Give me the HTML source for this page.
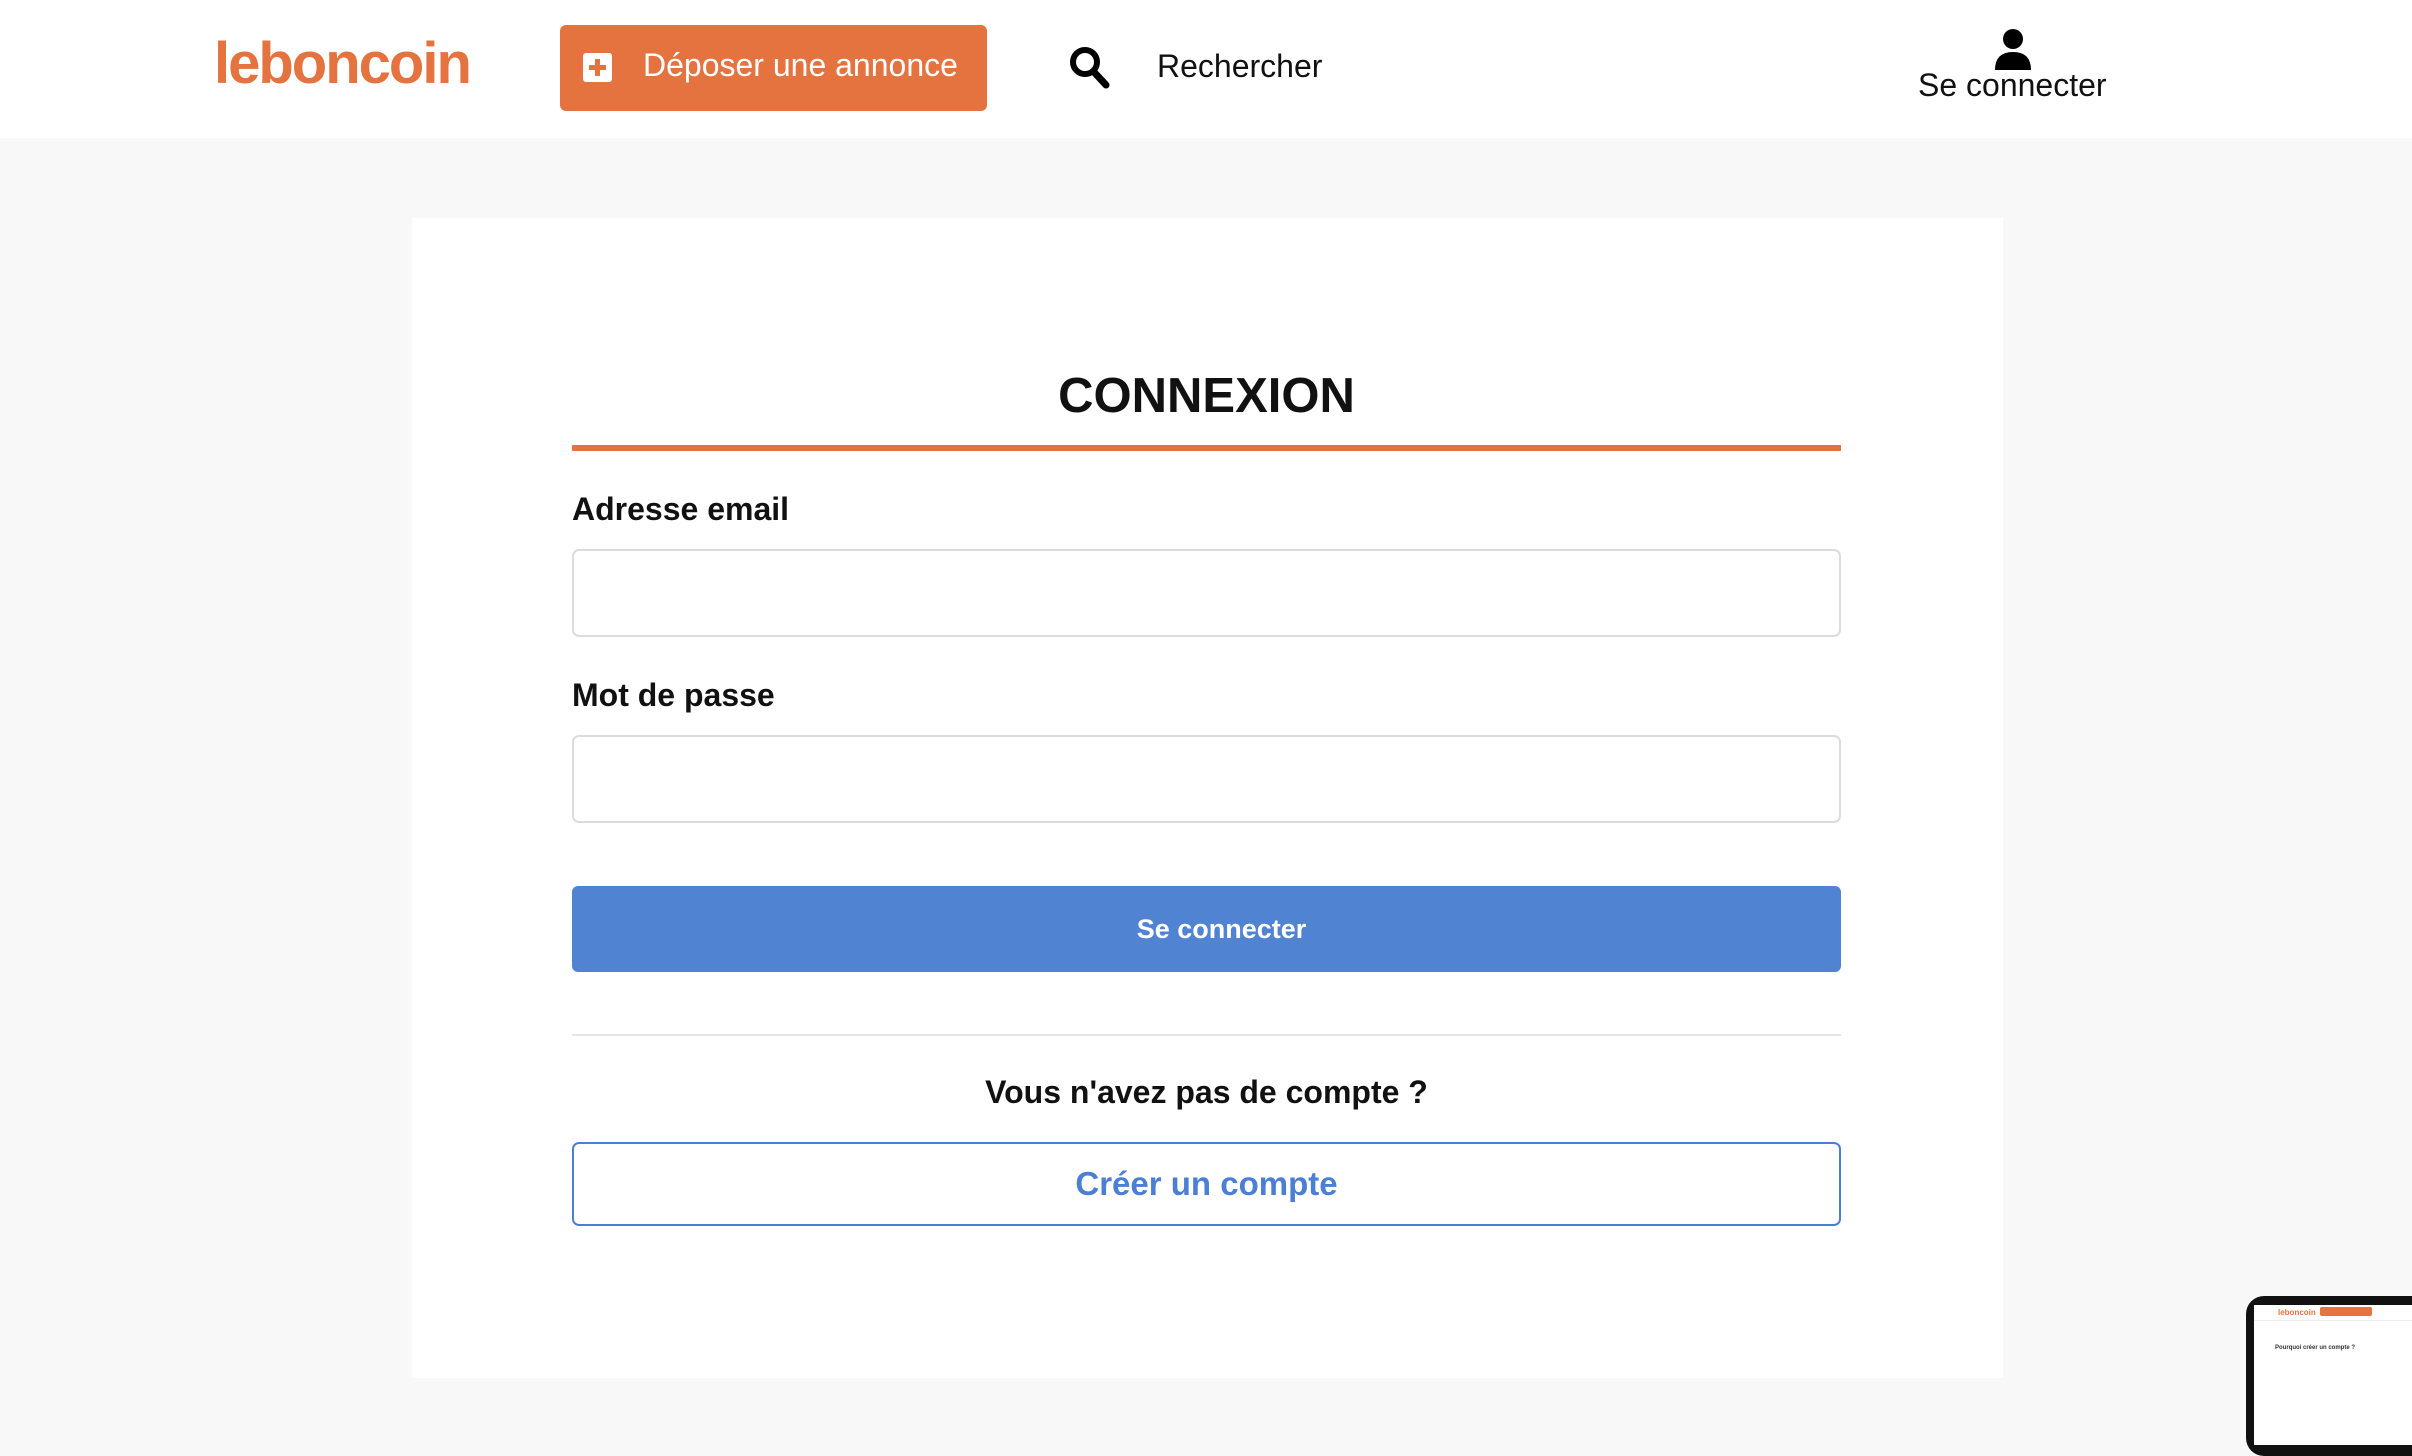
<!DOCTYPE html>
<html><head><meta charset="utf-8"><style>
*{margin:0;padding:0;box-sizing:border-box}
body{width:2412px;height:1400px;overflow:hidden;background:#f8f8f8;font-family:"Liberation Sans",sans-serif;position:relative}
.hdr{position:absolute;left:0;top:0;width:2412px;height:138px;background:#fff}
.abs{position:absolute}
.card{position:absolute;left:412px;top:218px;width:1591px;height:1160px;background:#fff}
.inp{position:absolute;left:572px;width:1269px;height:88px;border:2px solid #dcdcdc;border-radius:7px;background:#fff}
.lbl{position:absolute;left:572px;font-weight:bold;font-size:32px;color:#111}
</style></head><body>
<div class="hdr">
<div class="abs" style="left:214px;top:30px;font-size:58px;font-weight:bold;color:#e57340;letter-spacing:-2px">leboncoin</div>
<div class="abs" style="left:560px;top:25px;width:427px;height:86px;background:#e57340;border-radius:6px"></div>
<div class="abs" style="left:583px;top:53px;width:29px;height:29px;background:#fff;border-radius:3px"></div>
<div class="abs" style="left:595px;top:59px;width:5px;height:17px;background:#e57340"></div>
<div class="abs" style="left:589px;top:65px;width:17px;height:5px;background:#e57340"></div>
<div class="abs" style="left:643px;top:47px;font-size:32px;color:#fff">Déposer une annonce</div>
<svg class="abs" style="left:1068px;top:45px" width="44" height="46" viewBox="0 0 44 46"><circle cx="17" cy="17" r="12" fill="none" stroke="#000" stroke-width="6"/><line x1="26" y1="27" x2="38" y2="40" stroke="#000" stroke-width="7" stroke-linecap="round"/></svg>
<div class="abs" style="left:1157px;top:48px;font-size:32px;color:#111">Rechercher</div>
<svg class="abs" style="left:1994px;top:28px" width="38" height="42" viewBox="0 0 38 42"><circle cx="19" cy="11" r="10" fill="#000"/><path d="M1 42 Q1 24 19 24 Q37 24 37 42Z" fill="#000"/></svg>
<div class="abs" style="left:1918px;top:67px;font-size:32px;color:#111">Se connecter</div>
</div>
<div class="card"></div>
<div class="abs" style="left:572px;top:368px;width:1269px;text-align:center;font-size:49px;font-weight:bold;color:#111">CONNEXION</div>
<div class="abs" style="left:572px;top:445px;width:1269px;height:6px;background:#e57340"></div>
<div class="lbl" style="top:491px">Adresse email</div>
<div class="inp" style="top:549px"></div>
<div class="lbl" style="top:677px">Mot de passe</div>
<div class="inp" style="top:735px"></div>
<div class="abs" style="left:572px;top:886px;width:1269px;height:86px;background:#5183d3;border-radius:6px;color:#fff;font-weight:bold;font-size:27px;text-align:center;line-height:86px;padding-left:30px">Se connecter</div>
<div class="abs" style="left:572px;top:1034px;width:1269px;height:2px;background:#e6e6e6"></div>
<div class="abs" style="left:572px;top:1074px;width:1269px;text-align:center;font-size:32px;font-weight:bold;color:#111">Vous n'avez pas de compte ?</div>
<div class="abs" style="left:572px;top:1142px;width:1269px;height:84px;border:2px solid #4a7fd4;border-radius:7px;color:#4a7fd4;font-weight:bold;font-size:33px;text-align:center;line-height:80px">Créer un compte</div>
<div class="abs" style="left:2246px;top:1296px;width:200px;height:160px;background:#111;border-radius:18px"></div>
<div class="abs" style="left:2254px;top:1305px;width:200px;height:140px;background:#fff"></div>
<div class="abs" style="left:2254px;top:1305px;width:200px;height:16px;background:#fff;border-bottom:1px solid #eee"></div>
<div class="abs" style="left:2278px;top:1308px;font-size:8px;font-weight:bold;color:#e57340">leboncoin</div>
<div class="abs" style="left:2320px;top:1307px;width:52px;height:9px;background:#e57340;border-radius:2px"></div>
<div class="abs" style="left:2275px;top:1345px;font-size:6px;font-weight:bold;color:#333">Pourquoi créer un compte ?</div>
</body></html>
